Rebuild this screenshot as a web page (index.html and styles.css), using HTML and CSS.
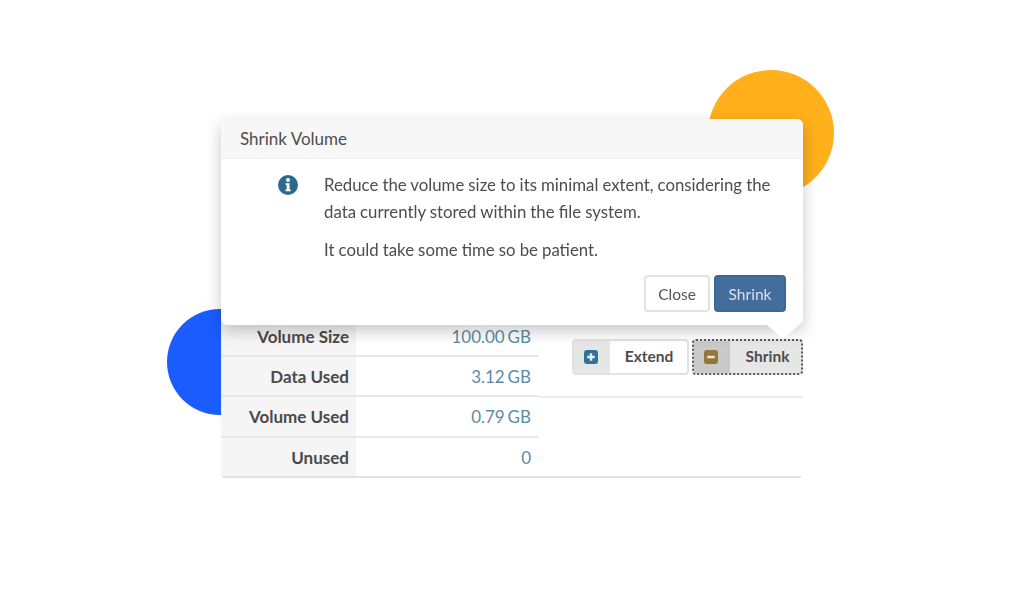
FILE: index.html
```html
<!DOCTYPE html>
<html lang="en">
<head>
<meta charset="utf-8">
<title>Shrink Volume</title>
<link rel="stylesheet" href="styles.css">
</head>
<body>
<main class="stage">
  <div class="circle circle-orange"></div>
  <div class="circle circle-blue"></div>

  <section class="card">
    <div class="stats">
      <div class="row"><div class="label">Volume Size</div><div class="value">100.00 GB</div></div>
      <div class="row"><div class="label">Data Used</div><div class="value">3.12 GB</div></div>
      <div class="row"><div class="label">Volume Used</div><div class="value">0.79 GB</div></div>
      <div class="row"><div class="label">Unused</div><div class="value">0</div></div>
    </div>
    <div class="side">
      <div class="actions">
        <div class="action">
          <span class="action-icon">
            <svg class="glyph" viewBox="0 0 14 14"><rect width="14" height="14" rx="3" fill="#2f7398"/><path d="M7 3.2v7.6M3.2 7h7.6" stroke="#e6eef3" stroke-width="2.4"/></svg>
          </span>
          <span class="action-text">Extend</span>
        </div>
        <div class="action action-active">
          <span class="action-icon">
            <svg class="glyph" viewBox="0 0 14 14"><rect width="14" height="14" rx="3" fill="#96753a"/><path d="M3.2 7h7.6" stroke="#ece6da" stroke-width="2.4"/></svg>
          </span>
          <span class="action-text">Shrink</span>
        </div>
      </div>
    </div>
  </section>

  <section class="dialog">
    <header class="dialog-head">Shrink Volume</header>
    <div class="dialog-body">
      <svg class="info" viewBox="0 0 20 20">
        <circle cx="10" cy="10" r="10" fill="#2b6a8e"/>
        <circle cx="10" cy="5" r="2" fill="#fff"/>
        <path d="M7.6 8.2h3.9v6.2h1.2v1.9H7.5v-1.9h1.2v-4.3H7.6z" fill="#fff"/>
      </svg>
      <div class="message">
        <p>Reduce the volume size to its minimal extent, considering the data currently stored within the file system.</p>
        <p>It could take some time so be patient.</p>
      </div>
    </div>
    <footer class="dialog-foot">
      <button class="btn" type="button">Close</button>
      <button class="btn btn-primary" type="button">Shrink</button>
    </footer>
    <div class="arrow"></div>
  </section>
</main>
</body>
</html>
```
FILE: styles.css
```css
* { box-sizing: border-box; }
html, body { margin: 0; background: #fff; }
body { font-family: Lato, "Open Sans", sans-serif; color: #4d4d4d; overflow: hidden; }

.stage { position: relative; width: 1024px; height: 596px; filter: blur(0.5px); }

.circle { position: absolute; border-radius: 50%; }
.circle-orange { left: 708px; top: 70px; width: 126px; height: 126px; background: #ffb01a; }
.circle-blue { left: 167px; top: 309px; width: 106px; height: 106px; background: #1a5cff; }

.card {
  position: absolute; left: 221px; top: 316px; width: 582px; height: 162px;
  display: flex; background: #fff; border-radius: 0 0 4px 4px;
}
.stats { width: 317px; display: flex; flex-direction: column; }
.row { flex: 1; display: flex; border-bottom: 2px solid #e8e8e8; }
.row:last-child { border-bottom-color: #e2e2e2; border-bottom-left-radius: 4px; }
.label {
  width: 135px; padding: 9px 7px 0 0; background: #f5f5f5; text-align: right;
  font-size: 17px; font-weight: 700; line-height: 22px; color: #4a4a4a;
}
.row:first-child .label, .row:first-child .value { padding-top: 10px; }
.row:last-child .label { border-bottom-left-radius: 4px; }
.value {
  flex: 1; padding: 9px 7px 0 0; text-align: right; font-size: 17px; line-height: 22px;
  color: #5b8ba6; word-spacing: -1.5px;
}

.side { flex: 1; display: flex; flex-direction: column; }
.actions {
  height: 82px; padding: 23px 0 0 34px; display: flex; gap: 3px; align-items: flex-start;
  border-bottom: 2px solid #ececec;
}
.side::after { content: ""; flex: 1; border-bottom: 2px solid #e2e2e2; margin-right: 2px; }
.action {
  width: 117px; height: 36px; display: flex; border: 2px solid #e2e2e2; border-radius: 4px;
  background: #fff; font-size: 15.5px; font-weight: 700; color: #4d4d4d; overflow: hidden;
}
.action-icon { width: 36px; padding-right: 2px; background: #e6e6e6; display: flex; align-items: center; justify-content: center; }
.glyph { width: 14px; height: 14px; }
.action-text { flex: 1; text-align: center; line-height: 31px; padding-left: 1px; }
.action-active { width: 111px; border: 2px dotted #55595c; background: #e6e6e6; }
.action-active .action-icon { background: #c9c9c9; }
.action-active .action-text { padding-left: 4px; }

.dialog {
  position: absolute; left: 221px; top: 119px; width: 582px; height: 206px;
  background: #fff; border-radius: 6px; box-shadow: 0 6px 16px rgba(0, 0, 0, .22);
  display: flex; flex-direction: column;
}
.dialog-head {
  height: 40px; padding: 0 19px; background: #f7f7f7; border-bottom: 1px solid #efefef;
  border-radius: 6px 6px 0 0; font-size: 17px; line-height: 40px; color: #4d4d4d;
}
.dialog-body { flex: 1; display: flex; padding: 16px 30px 0 57px; }
.info { width: 20px; height: 20px; margin-right: 26px; flex: none; }
.message { font-size: 16.8px; line-height: 27px; color: #4d4d4d; margin-top: -4px; word-spacing: -.2px; }
.message p { margin: 0 0 11px; }
.dialog-foot { display: flex; justify-content: flex-end; gap: 4px; padding: 0 17px 13px; }
.btn {
  height: 37px; width: 66px; padding: 0; font: 400 15.5px Lato, sans-serif; color: #555;
  background: #fff; border: 2px solid #e2e2e2; border-radius: 4px;
}
.btn-primary { width: 72px; color: #d7e0ea; background: #436d9b; border-color: #3e6793; }
.arrow {
  position: absolute; left: 546px; top: 100%; width: 32px; height: 14px;
  background: #fff; clip-path: polygon(0 0, 100% 0, 50% 100%);
}
```
